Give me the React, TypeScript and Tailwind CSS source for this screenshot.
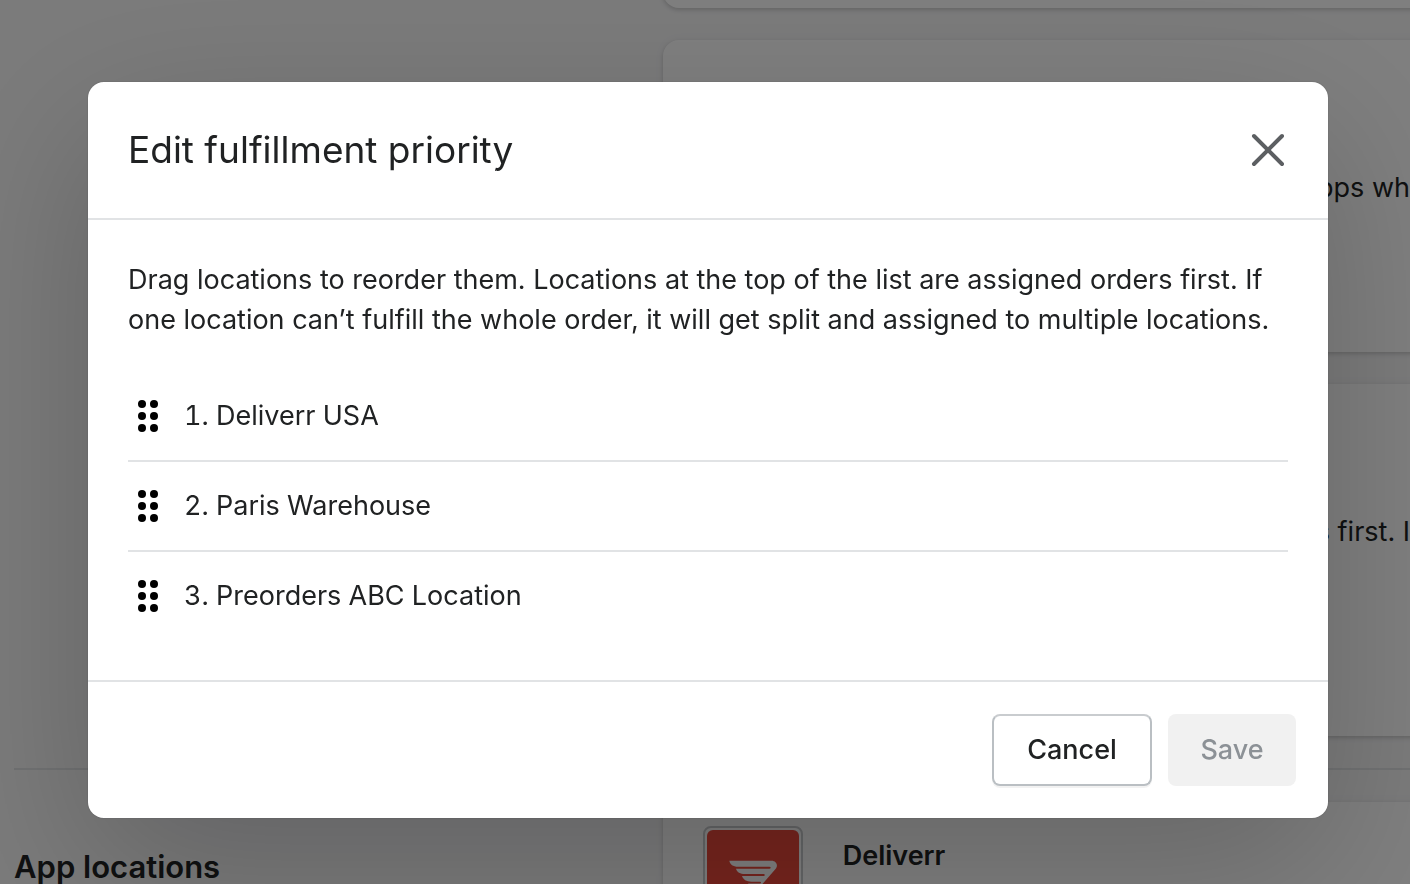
import React, { useState } from "react";

const initialLocations = ["Deliverr USA", "Paris Warehouse", "Preorders ABC Location"];

const cardShadow = "shadow-[0_0_10px_rgba(23,24,24,0.05),0_2px_4px_rgba(0,0,0,0.15)]";

const DragHandleIcon = () => (
  <svg viewBox="0 0 40 40" className="h-10 w-10 shrink-0" fill="#000" aria-hidden="true">
    {[8, 20, 32].map((y) => (
      <React.Fragment key={y}>
        <circle cx="14" cy={y} r="4" />
        <circle cx="26" cy={y} r="4" />
      </React.Fragment>
    ))}
  </svg>
);

const CloseIcon = () => (
  <svg viewBox="0 0 40 40" className="h-10 w-10" stroke="#5c5f62" strokeWidth="4" strokeLinecap="round" aria-hidden="true">
    <path d="M6 6l28 28M34 6L6 34" />
  </svg>
);

const DeliverrLogo = () => (
  <svg viewBox="0 0 92 92" className="h-[92px] w-[92px] rounded-md bg-[#ee4a3c]" aria-hidden="true">
    <path
      fill="#fff"
      d="M22.300 30.700H64.500C69.500 30.700 71.500 35.500 68.500 39L52 58C50 60 47 60 45 58L41 53.500H52.500C54.500 53.500 54.500 51.700 53 51.700H44.500C39.500 51.700 36 49.500 35 46H56C58.500 46 58.500 44 56 44H38C33 44 30 42 29 38.700H61.500C64.500 38.700 64.500 36.700 61.500 36.700H31C26 36.700 23 34.500 22.300 30.700Z"
    />
  </svg>
);

const SettingsPage = () => (
  <div className="h-screen overflow-hidden bg-[#f6f6f7]" aria-hidden="true">
    <div className="ml-[47%] flex flex-col gap-8">
      <div className={`-mt-8 -mr-6 h-10 rounded-2xl bg-white ${cardShadow}`} />
      <div className={`-mr-6 flex min-h-[312px] justify-end rounded-2xl bg-white pt-32 pr-6 ${cardShadow}`}>
        <p className="whitespace-nowrap">pps wh</p>
      </div>
      <div className={`-mr-6 flex min-h-[352px] justify-end rounded-2xl bg-white pt-32 pr-6 ${cardShadow}`}>
        <p className="whitespace-nowrap">s first. I</p>
      </div>
    </div>

    <div className="mt-8 ml-3.5 border-t-2 border-[#e1e3e5]" />

    <div className="flex pt-8">
      <div className="w-[47%] shrink-0 pt-11 pl-3.5">
        <h2 className="text-[31px] leading-[42px] font-semibold">App locations</h2>
      </div>
      <div className={`-mr-6 flex flex-1 gap-10 rounded-2xl bg-white p-10 pt-6 ${cardShadow}`}>
        <div className="flex h-[100px] w-[100px] items-center justify-center rounded-lg border-2 border-[#c9cccf]">
          <DeliverrLogo />
        </div>
        <h3 className="pt-2.5 font-semibold">Deliverr</h3>
      </div>
    </div>
  </div>
);

const App = () => {
  const [open, setOpen] = useState(true);
  const [locations, setLocations] = useState(initialLocations);
  const [dragged, setDragged] = useState<number | null>(null);

  const changed = locations.some((name, i) => name !== initialLocations[i]);

  const handleDrop = (target: number) => {
    if (dragged === null) return;
    const next = [...locations];
    const [moved] = next.splice(dragged, 1);
    next.splice(target, 0, moved);
    setLocations(next);
    setDragged(null);
  };

  return (
    <div className="font-[Inter,sans-serif] text-[27px] leading-10 text-[#202223]">
      <SettingsPage />

      {open && (
        <div className="fixed inset-0 flex items-start justify-center bg-black/50 pt-[82px] pr-[82px] pl-[88px]">
          <div
            role="dialog"
            aria-modal="true"
            aria-labelledby="modal-title"
            className="w-full max-w-[1240px] rounded-2xl bg-white shadow-[0_52px_160px_rgba(0,0,0,0.2),0_0_2px_rgba(0,0,0,0.2)]"
          >
            <div className="flex items-center justify-between border-b-2 border-[#e1e3e5] p-10">
              <h1 id="modal-title" className="text-[37px] leading-14">
                Edit fulfillment priority
              </h1>
              <button type="button" aria-label="Close" onClick={() => setOpen(false)}>
                <CloseIcon />
              </button>
            </div>

            <div className="p-10">
              <p>
                Drag locations to reorder them. Locations at the top of the list are assigned orders first. If one
                location can’t fulfill the whole order, it will get split and assigned to multiple locations.
              </p>
              <ol className="mt-8 divide-y-2 divide-[#e1e3e5] tabular-nums">
                {locations.map((name, index) => (
                  <li
                    key={name}
                    draggable
                    onDragStart={() => setDragged(index)}
                    onDragOver={(e) => e.preventDefault()}
                    onDrop={() => handleDrop(index)}
                    className="flex cursor-grab items-center gap-4 py-6"
                  >
                    <DragHandleIcon />
                    <span>
                      {index + 1}. {name}
                    </span>
                  </li>
                ))}
              </ol>
            </div>

            <div className="flex justify-end gap-4 border-t-2 border-[#e1e3e5] p-8">
              <button
                type="button"
                onClick={() => setOpen(false)}
                className="h-[72px] w-40 rounded-lg border-2 border-[#babfc3] border-t-[#c9cccf] bg-white font-medium shadow-[0_2px_0_rgba(0,0,0,0.05)]"
              >
                Cancel
              </button>
              <button
                type="button"
                disabled={!changed}
                onClick={() => setOpen(false)}
                className="h-[72px] w-32 rounded-lg bg-[#008060] font-medium text-white disabled:bg-[#f1f1f1] disabled:text-[#8c9196]"
              >
                Save
              </button>
            </div>
          </div>
        </div>
      )}
    </div>
  );
};

export default App;
